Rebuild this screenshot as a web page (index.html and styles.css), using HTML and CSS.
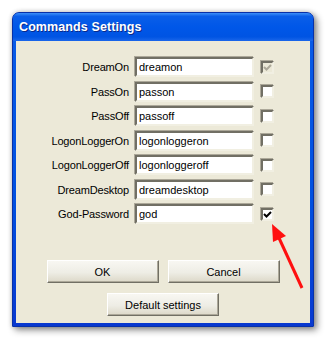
FILE: index.html
```html
<!DOCTYPE html>
<html lang="en">
<head>
  <meta charset="UTF-8">
  <title>Commands Settings</title>
  <link rel="stylesheet" href="styles.css">
</head>
<body>
  <div class="window">
    <div class="titlebar">Commands Settings</div>
    <div class="client">
      <div class="form">
        <label>DreamOn</label>
        <div class="field">dreamon</div>
        <span class="check disabled"><svg viewBox="0 0 9 9"><path d="M1 4 L3.5 6.5 L8 2" /></svg></span>

        <label>PassOn</label>
        <div class="field">passon</div>
        <span class="check"></span>

        <label>PassOff</label>
        <div class="field">passoff</div>
        <span class="check"></span>

        <label>LogonLoggerOn</label>
        <div class="field">logonloggeron</div>
        <span class="check"></span>

        <label>LogonLoggerOff</label>
        <div class="field">logonloggeroff</div>
        <span class="check"></span>

        <label>DreamDesktop</label>
        <div class="field">dreamdesktop</div>
        <span class="check"></span>

        <label>God-Password</label>
        <div class="field">god</div>
        <span class="check"><svg viewBox="0 0 9 9"><path d="M1 4 L3.5 6.5 L8 2" /></svg></span>
      </div>

      <div class="buttons">
        <button>OK</button>
        <button>Cancel</button>
      </div>
      <div class="buttons">
        <button>Default settings</button>
      </div>
    </div>
  </div>

  <!-- annotation arrow pointing at the checked box -->
  <svg class="arrow" width="326" height="338" viewBox="0 0 326 338">
    <line x1="279" y1="238" x2="302" y2="288" />
    <polygon points="272,224 286,236 273,242" />
  </svg>
</body>
</html>
```

FILE: styles.css
```css
:root {
  --face: #ece9d8;
  --dark: #716f64;
  --mid: #aca899;
  --light: #f1efe2;
}
* { box-sizing: border-box; margin: 0; padding: 0; }
body {
  width: 326px;
  height: 338px;
  padding: 12px;
  background: #ffffff;
  font-family: "Liberation Sans", Arial, sans-serif;
  font-size: 11px;
  color: #000000;
  overflow: hidden;
}
.window {
  width: 302px;
  height: 315px;
  background: linear-gradient(#0a5ce8, #0050e0 60%, #0838d0);
  border-radius: 7px 7px 0 0;
  box-shadow: 3px 3px 7px rgba(0, 0, 0, 0.45), 0 0 5px rgba(0, 0, 0, 0.2);
  display: flex;
  flex-direction: column;
  border: 1px solid #0831a9;
}
.titlebar {
  height: 28px;
  flex: none;
  padding-left: 6px;
  display: flex;
  align-items: center;
  color: #ffffff;
  font-family: "Liberation Sans", Arial, sans-serif;
  font-weight: bold;
  font-size: 12.5px;
  letter-spacing: 0.1px;
  text-shadow: 1px 1px 0 #0a2a8a;
  background: linear-gradient(#3d8ff8 0%, #0a5ee8 12%, #0057e8 50%, #0054e3 85%, #1a66ea 100%);
  border-radius: 6px 6px 0 0;
}
.client {
  flex: 1;
  margin: 0 3px 3px;
  background: var(--face);
  padding-top: 16px;
}
.form {
  display: grid;
  grid-template-columns: 113px 132px 13px;
  grid-auto-rows: 20px;
  row-gap: 4.5px;
  align-items: center;
}
.form label {
  text-align: right;
  letter-spacing: -0.15px;
}
.field {
  margin-left: 6px;
  width: 119px;
  height: 20px;
  background: #ffffff;
  border-style: solid;
  border-width: 2px;
  border-color: var(--dark) var(--light) var(--light) var(--dark);
  box-shadow: -1px -1px 0 var(--mid);
  padding: 0 2px;
  line-height: 16px;
}
.check {
  width: 13px;
  height: 13px;
  background: #ffffff;
  border-style: solid;
  border-width: 2px;
  border-color: var(--dark) var(--light) var(--light) var(--dark);
  box-shadow: -1px -1px 0 var(--mid);
  display: flex;
  align-items: center;
  justify-content: center;
}
.check svg {
  width: 9px;
  height: 9px;
}
.check path {
  fill: none;
  stroke: #000000;
  stroke-width: 2;
}
.check.disabled {
  background: var(--face);
}
.check.disabled path {
  stroke: var(--mid);
}
.buttons {
  display: flex;
  justify-content: center;
  gap: 9px;
  margin-top: 36px;
}
.buttons + .buttons {
  margin-top: 10px;
}
button {
  width: 112px;
  height: 23px;
  font-family: "Liberation Sans", Arial, sans-serif;
  font-size: 11px;
  color: #000000;
  background: linear-gradient(#f8f7f2, #eeede5 55%, #dcd8c8);
  border: 1px solid;
  border-color: #ffffff var(--dark) var(--dark) #ffffff;
  box-shadow: inset -1px -1px 0 var(--mid);
}
.arrow {
  position: absolute;
  left: 0;
  top: 0;
  pointer-events: none;
}
.arrow line {
  stroke: #ff1010;
  stroke-width: 3;
}
.arrow polygon {
  fill: #ff1010;
}
```
